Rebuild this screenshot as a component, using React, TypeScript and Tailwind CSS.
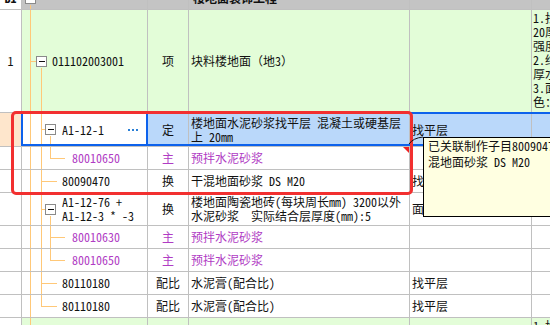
import React from "react";

type V = [number, "t" | "m" | "x", "m" | "b"];

type RowData = {
  hc: string;
  h: number;
  no?: string;
  kind: "head" | "item" | "sel" | "sub";
  box?: number;
  indent: number;
  code: string[];
  purple?: boolean;
  type?: string;
  name: string[];
  unit?: string;
  desc?: string[];
  note?: boolean;
  v: V[];
  hz?: [number, number];
};

const L0 = 8.5;
const L1 = 19.5;
const L2 = 28.5;

const rows: RowData[] = [
  { hc: "h-[23px]", h: 23, no: "B1", kind: "head", box: 3, indent: 20, code: [], name: ["楼地面装饰工程"], v: [[L0, "x", "b"]] },
  {
    hc: "h-[103px]", h: 103, no: "1", kind: "item", box: 14, indent: 30, code: ["011102003001"], type: "项",
    name: ["块料楼地面（地3）"],
    desc: ["1.找平层：", "20厚1:3水泥砂浆", "强度等级M20", "2.结合层：", "厚水泥砂浆", "3.面层：", "色：浅灰色"],
    v: [[L0, "t", "b"], [L1, "x", "b"]], hz: [L0, 14],
  },
  {
    hc: "h-[34px]", h: 34, kind: "sel", box: 23, indent: 40, code: ["A1-12-1"], type: "定",
    name: ["楼地面水泥砂浆找平层 混凝土或硬基层", "上 20mm"], unit: "找平层",
    v: [[L0, "t", "b"], [L1, "t", "b"], [L2, "x", "b"]], hz: [L1, 23],
  },
  {
    hc: "h-[23px]", h: 23, kind: "sub", indent: 50, code: ["80010650"], purple: true, type: "主",
    name: ["预拌水泥砂浆"], note: true,
    v: [[L0, "t", "b"], [L1, "t", "b"], [L2, "t", "m"]], hz: [L2, 43],
  },
  {
    hc: "h-[23px]", h: 23, kind: "sub", indent: 40, code: ["80090470"], type: "换",
    name: ["干混地面砂浆 DS M20"], unit: "找平层",
    v: [[L0, "t", "b"], [L1, "t", "b"]], hz: [L1, 35],
  },
  {
    hc: "h-[33px]", h: 33, kind: "sub", box: 23, indent: 40, code: ["A1-12-76 +", "A1-12-3 * -3"], type: "换",
    name: ["楼地面陶瓷地砖(每块周长mm) 3200以外", "水泥砂浆　实际结合层厚度(mm):5"], unit: "面层",
    v: [[L0, "t", "b"], [L1, "t", "b"], [L2, "x", "b"]], hz: [L1, 23],
  },
  {
    hc: "h-[23px]", h: 23, kind: "sub", indent: 50, code: ["80010630"], purple: true, type: "主",
    name: ["预拌水泥砂浆"],
    v: [[L0, "t", "b"], [L1, "t", "b"], [L2, "t", "b"]], hz: [L2, 43],
  },
  {
    hc: "h-[23px]", h: 23, kind: "sub", indent: 50, code: ["80010650"], purple: true, type: "主",
    name: ["预拌水泥砂浆"],
    v: [[L0, "t", "b"], [L1, "t", "b"], [L2, "t", "m"]], hz: [L2, 43],
  },
  {
    hc: "h-[23px]", h: 23, kind: "sub", indent: 40, code: ["80110180"], type: "配比",
    name: ["水泥膏(配合比)"], unit: "找平层",
    v: [[L0, "t", "b"], [L1, "t", "b"]], hz: [L1, 35],
  },
  {
    hc: "h-[23px]", h: 23, kind: "sub", indent: 40, code: ["80110180"], type: "配比",
    name: ["水泥膏(配合比)"], unit: "找平层",
    v: [[L0, "t", "b"], [L1, "t", "m"]], hz: [L1, 35],
  },
  {
    hc: "h-[60px]", h: 60, no: "2", kind: "item", box: 14, indent: 30, code: ["011102003002"], type: "项",
    name: ["块料楼地面（地4）"], desc: ["1.找平层：", "20厚1:3水泥砂浆"],
    v: [[L0, "t", "b"]], hz: [L0, 14],
  },
];

const TreeMark = ({ r }: { r: RowData }) => {
  const mid = Math.floor((r.h - 1) / 2) + 0.5;
  const yOf = (k: string) => (k === "t" ? 0 : k === "b" ? r.h : k === "m" ? mid : mid + 6);
  return (
    <svg className="absolute left-0 top-0 pointer-events-none" width={126} height={r.h} shapeRendering="crispEdges">
      {r.v.map(([x, a, b], i) => (
        <line key={i} x1={x} y1={yOf(a)} x2={x} y2={yOf(b)} stroke="#ffc878" strokeWidth={1} />
      ))}
      {r.hz && <line x1={r.hz[0]} y1={mid} x2={r.hz[1]} y2={mid} stroke="#ffc878" strokeWidth={1} />}
      {r.box !== undefined && (
        <g>
          <rect x={r.box + 0.5} y={mid - 5} width={10} height={10} fill="#fff" stroke="#8a8a8a" />
          <line x1={r.box + 3} y1={mid} x2={r.box + 9} y2={mid} stroke="#111" />
        </g>
      )}
    </svg>
  );
};

const cell = "border-r border-b border-[#c0c0c0] overflow-hidden";

const TableRow = ({ r }: { r: RowData }) => {
  const head = r.kind === "head";
  const green = r.kind === "item";
  const sel = r.kind === "sel";
  const body = head ? "bg-[#c4c4c4]" : green ? "bg-[#e3fdd8]" : sel ? "bg-[#bad8fa]" : "bg-white";
  const txt = r.purple ? "text-[#b03cc4]" : "text-[#111]";

  return (
    <div className={`relative grid grid-cols-[22px_126px_41px_221px_122px_120px] ${r.hc}`}>
      <div className={`${cell} flex items-center justify-center ${sel ? "bg-[#fee6cc]" : "bg-white"} ${head ? "font-bold" : ""}`}>
        {r.no}
      </div>
      <div className={`${cell} relative flex items-center ${head ? "bg-[#c4c4c4]" : green ? "bg-[#e3fdd8]" : "bg-white"} ${txt}`}>
        <TreeMark r={r} />
        <div className="relative flex flex-col whitespace-nowrap" style={{ paddingLeft: r.indent }}>
          {r.code.map((c, i) => (
            <span key={i}>{c}</span>
          ))}
        </div>
        {sel && (
          <div className="absolute left-[106px] top-[16px] flex gap-[2px]">
            <span className="w-[2px] h-[2px] bg-[#2a7fd6]" />
            <span className="w-[2px] h-[2px] bg-[#2a7fd6]" />
            <span className="w-[2px] h-[2px] bg-[#2a7fd6]" />
          </div>
        )}
      </div>
      <div className={`${cell} flex items-center justify-center ${body} ${txt}`}>{r.type}</div>
      <div className={`${cell} relative flex flex-col justify-center whitespace-nowrap ${head ? "pl-1 font-bold" : "pl-[2px]"} ${body} ${txt}`}>
        {r.name.map((n, i) => (
          <span key={i}>{n}</span>
        ))}
        {r.note && (
          <span className="absolute right-0 top-0 w-0 h-0 border-t-[6px] border-l-[6px] border-t-[#f02020] border-l-transparent" />
        )}
      </div>
      <div className={`${cell} flex items-center whitespace-nowrap pl-[2px] ${body}`}>{r.unit}</div>
      <div className={`${cell} flex flex-col ${green ? "justify-start pt-px" : "justify-center"} pl-px whitespace-nowrap ${body}`}>
        {r.desc?.map((d, i) => (
          <span key={i}>{d}</span>
        ))}
      </div>
      {sel && (
        <>
          <div className="absolute left-[21px] right-0 top-[-1px] bottom-[1px] border-2 border-r-0 border-[#0d62ec] pointer-events-none" />
          <div className="absolute left-[146px] w-[2px] top-[-1px] bottom-[1px] bg-[#0d62ec]" />
        </>
      )}
    </div>
  );
};

export default function App() {
  return (
    <div className="relative w-[550px] h-[325px] overflow-hidden bg-white text-[12px] leading-[14px] text-[#111] font-['Noto_Sans_Mono_CJK_SC','Noto_Sans_CJK_SC',sans-serif]">
      <div className="-mt-[13px] flex flex-col">
        {rows.map((r, i) => (
          <TableRow key={i} r={r} />
        ))}
      </div>

      {/* 红框标注 */}
      <div className="absolute left-[11px] top-[111px] w-[402px] h-[84px] border-[3px] border-[#f23030] rounded-[5px] pointer-events-none" />

      {/* 批注连线 */}
      <svg className="absolute left-[405px] top-[134px]" width={20} height={14}>
        <path d="M4 10 Q8 4 18 3" fill="none" stroke="#111" strokeWidth={1} />
      </svg>

      {/* 批注提示 */}
      <div className="absolute left-[423px] top-[137px] w-[160px] h-[80px] border border-black bg-[#ffffe1] px-1 text-[12px] leading-[16px] text-[#111]">
        已关联制作子目80090470干混地面砂浆 DS M20
      </div>
    </div>
  );
}
